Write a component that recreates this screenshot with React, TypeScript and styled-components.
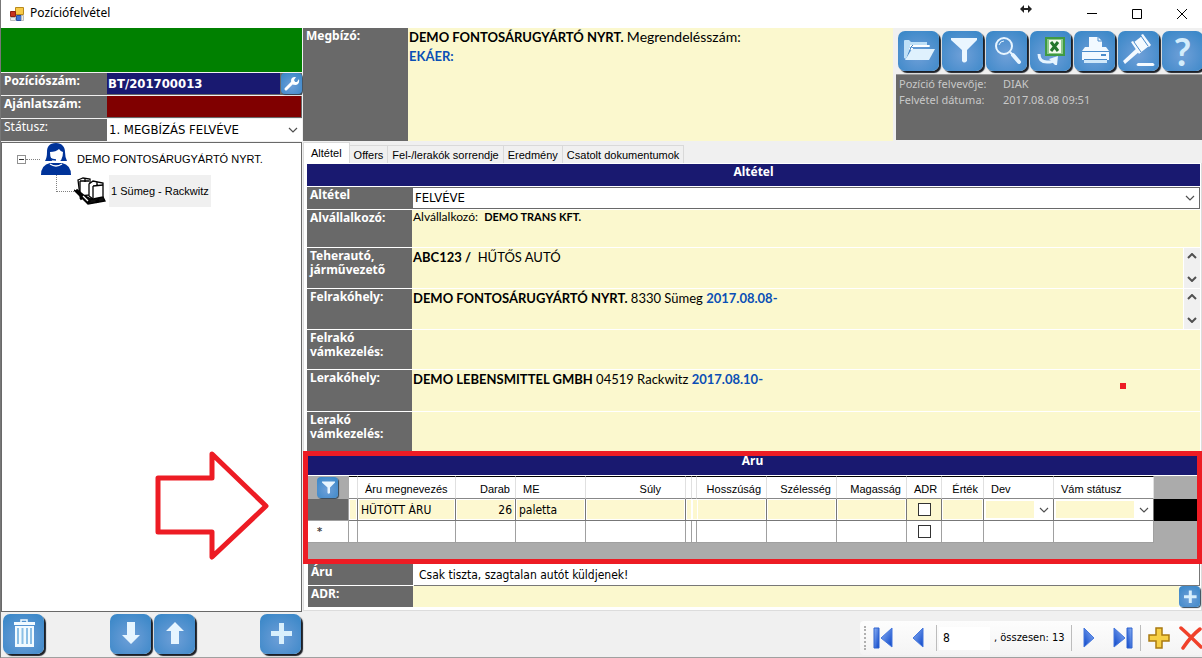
import React from "react";
import styled, { createGlobalStyle, css } from "styled-components";

const c = {
  gray: "#696969",
  navy: "#191970",
  cream: "#fbf8ce",
  form: "#f0f0f0",
  red: "#ed1c24",
  link: "#0a4fb5",
};
const tahoma = `"DejaVu Sans Condensed", "DejaVu Sans", sans-serif`;
const label = `"Noto Sans", "Open Sans", sans-serif`;
const calibri = `Lato, "Open Sans", sans-serif`;
const msSans = `"Liberation Sans", Arial, sans-serif`;

const Global = createGlobalStyle`
  * { box-sizing: border-box; }
  body { margin: 0; background: ${c.form}; overflow-x: hidden; color: #000; font: 12px/16px ${msSans}; }
  button, input, select { font: inherit; color: inherit; margin: 0; padding: 0; border: 0; border-radius: 0; background: none; }
  svg { display: block; flex: none; }
`;

const Window = styled.div`
  display: flex;
  flex-direction: column;
  min-height: 100vh;
  overflow: hidden;
  border-left: 1px solid #777;
  border-bottom: 2px solid #a0a0a0;
`;
const TitleBar = styled.header`
  display: flex;
  align-items: center;
  height: 28px;
  padding-left: 9px;
  gap: 6px;
  background: #fff;
`;
const Title = styled.h1`
  margin: 0;
  flex: 1;
  font: 400 12px/16px ${label};
  padding-bottom: 2px;
`;
const WindowControls = styled.div`
  display: flex;
  gap: 5px;
  margin-left: 34px;
`;
const WindowButton = styled.button`
  display: grid;
  place-items: center;
  width: 40px;
  height: 24px;
`;
const Body = styled.div`
  flex: 1;
  display: grid;
  grid-template-columns: 302px minmax(0, 1fr);
`;
const Side = styled.aside`
  display: flex;
  flex-direction: column;
  padding-right: 1px;
`;
const Main = styled.main`
  display: flex;
  flex-direction: column;
  min-width: 0;
`;
const Banner = styled.div`
  height: 44px;
  background: #008000;
`;
const InfoRow = styled.div`
  display: flex;
  height: 22px;
  margin-top: 1px;
  background: ${c.gray};
`;
const InfoLabel = styled.label<{ $plain?: boolean }>`
  width: 105px;
  padding-left: 3px;
  margin-right: 1px;
  color: #fff;
  font: ${(p) => (p.$plain ? 400 : 700)} 12px/16px ${label};
`;
const InfoInput = styled.input<{ $bg: string }>`
  flex: 1;
  min-width: 0;
  margin: 0 1px 1px 0;
  background: ${(p) => p.$bg};
  color: #fff;
  font: 700 13px/20px ${tahoma};
  padding-left: 1px;
`;
const SelectBox = styled.span<{ $bordered?: boolean }>`
  position: relative;
  display: flex;
  flex: 1;
  min-width: 0;
  background: #fff;
  ${(p) => p.$bordered && css`border: 1px solid ${c.gray};`}
  svg { position: absolute; right: 4px; top: 50%; margin-top: -3px; pointer-events: none; }
`;
const Select = styled.select`
  flex: 1;
  min-width: 0;
  appearance: none;
  padding-left: 2px;
  font: 13px/20px ${tahoma};
`;
const BlueButton = styled.button<{ $small?: boolean }>`
  display: grid;
  place-content: center;
  flex: none;
  width: ${(p) => (p.$small ? 21 : 41)}px;
  height: ${(p) => (p.$small ? 21 : 40)}px;
  border-radius: ${(p) => (p.$small ? 4 : 7)}px;
  background: radial-gradient(circle at 50% 60%, #6fa0d8 0%, #5593d0 45%, #3d89c9 85%);
  box-shadow: ${(p) => (p.$small ? "1px 1px 1px #345" : "2px 2px 1px #1b1f26")};
  color: #e4f3ff;
`;
const HelpMark = styled.span`
  font: 700 38px/38px ${calibri};
  color: #d3ecfb;
`;
const Tree = styled.ul`
  position: relative;
  flex: 1;
  margin: 1px 0 0;
  padding: 0;
  list-style: none;
  background: #fff;
  border: 1px solid ${c.gray};
  min-height: 470px;
`;
const TreeItem = styled.li<{ $child?: boolean }>`
  display: flex;
  align-items: center;
  height: 32px;
  padding-left: ${(p) => (p.$child ? 54 : 15)}px;
`;
const Expander = styled.button`
  display: grid;
  place-items: center;
  width: 9px;
  height: 9px;
  border: 1px solid #919191;
  background: #fff;
  &::after { content: ""; width: 5px; height: 1px; background: #333; }
`;
const HLine = styled.span`
  width: 14px;
  margin-right: 1px;
  border-top: 1px dotted #808080;
`;
const Elbow = styled.span`
  align-self: flex-start;
  width: 18px;
  height: 17px;
  border-left: 1px dotted #808080;
  border-bottom: 1px dotted #808080;
`;
const TreeLabel = styled.span<{ $selected?: boolean }>`
  margin-left: 3px;
  padding: 0 2px;
  font: 11px/32px ${msSans};
  background: ${(p) => (p.$selected ? c.form : "transparent")};
`;
const Pointer = styled.li`
  position: absolute;
  left: 152px;
  top: 306px;
`;
const SideActions = styled.div`
  display: flex;
  gap: 3px;
  height: 45px;
  padding: 2px 1px 0 2px;
`;
const Spring = styled.span`
  flex: 1;
`;
const ClientBar = styled.section`
  display: flex;
  height: 113px;
`;
const ClientLabel = styled.div`
  width: 105px;
  padding-left: 3px;
  background: ${c.gray};
  color: #fff;
  font: 700 12px/16px ${label};
`;
const ClientText = styled.div`
  flex: 1;
  min-width: 0;
  padding: 0 1px;
  background: ${c.cream};
  font: 13px/19px ${calibri};
  margin-right: 3px;
`;
const Note = styled.span`
  font-size: 14px;
  line-height: 16px;
`;
const Blue = styled.b`
  color: ${c.link};
`;
const Tools = styled.div`
  width: 306px;
  overflow: hidden;
`;
const ToolRow = styled.div`
  display: flex;
  gap: 3px;
  padding: 3px 0 0 2px;
  height: 46px;
`;
const Meta = styled.dl`
  display: grid;
  grid-template-columns: 104px 1fr;
  align-content: start;
  height: 66px;
  margin: 0;
  padding: 1px 0 0 3px;
  background: ${c.gray};
  border-top: 1px solid #999;
  color: #c8c8c8;
  font: 11px/16px ${label};
  dd { margin: 0; }
`;
const Tabs = styled.nav`
  display: flex;
  align-items: flex-end;
  height: 22px;
`;
const Tab = styled.button<{ $active?: boolean }>`
  height: ${(p) => (p.$active ? 21 : 18)}px;
  padding: 0 ${(p) => (p.$active ? 7 : 4)}px;
  border: 1px solid #d9d9d9;
  border-left-width: ${(p) => (p.$active ? 1 : 0)}px;
  border-bottom: 0;
  background: ${(p) => (p.$active ? "#fff" : c.form)};
  font: 11px/18px ${msSans};
  white-space: nowrap;
`;
const Page = styled.section`
  position: relative;
  background: #fff;
  border: 1px solid #dcdcdc;
  border-top: 0;
  padding: 1px 0 2px;
`;
const Heading = styled.h2`
  margin: 0 1px 0 3px;
  height: 22px;
  background: ${c.navy};
  color: #fff;
  text-align: center;
  font: 700 12px/16px ${label};
`;
const Field = styled.div<{ $h: number }>`
  display: flex;
  min-height: ${(p) => p.$h}px;
  margin: 1px 1px 0 3px;
`;
const FieldLabel = styled.label`
  width: 105px;
  flex: none;
  padding: 1px 3px 0;
  background: ${c.gray};
  color: #fff;
  font: 700 12px/14px ${label};
`;
const FieldValue = styled.div<{ $small?: boolean }>`
  flex: 1;
  min-width: 0;
  padding: 0 1px;
  background: ${c.cream};
  font: ${(p) => (p.$small ? "12px/14px" : "13px/18px")} ${calibri};
  white-space: pre-wrap;
  b { ${(p) => p.$small && "font-size: 11px;"} }
`;
const Scroller = styled.div`
  display: flex;
  flex-direction: column;
  justify-content: space-between;
  width: 17px;
  padding: 5px 3px 6px;
  border-left: 1px solid #fff;
  background: ${c.form};
`;
const Marker = styled.span`
  position: absolute;
  right: 75px;
  top: 220px;
  width: 6px;
  height: 6px;
  background: ${c.red};
`;
const Goods = styled.section`
  position: relative;
  background: #ababab;
  height: 113px;
  margin: 0 -1px;
  &::after { content: ""; position: absolute; inset: 0; border: 5px solid ${c.red}; pointer-events: none; }
`;
const GoodsHeading = styled(Heading)`
  height: 25px;
  margin: 0;
  padding-top: 2px;
  border-bottom: 1px solid #fff;
`;
const Grid = styled.table`
  width: 100%;
  table-layout: fixed;
  border-collapse: separate;
  border-spacing: 0;
  th, td { padding: 0; height: 22px; }
  thead th { height: 23px; }
  td:last-child, th:last-child, th:first-child { border: 0; background: transparent; }
  tr.current td:last-child { background: #000; }
`;
const Th = styled.th<{ $align?: string; $pad?: number }>`
  && { padding: 3px ${(p) => p.$pad || 5}px 0 7px; }
  background: #fff;
  border-top: 1px solid #000;
  border-right: 1px solid #e0e0e0;
  border-bottom: 1px solid #888;
  text-align: ${(p) => p.$align || "left"};
  font: 400 11px/18px ${msSans};
  white-space: nowrap;
`;
const Td = styled.td<{ $on?: boolean; $check?: boolean }>`
  background: ${(p) => (p.$check && p.$on ? "#fdf8d0" : "#fff")};
  border-right: 1px solid ${(p) => (p.$on ? "#777" : "#a0a0a0")};
  border-bottom: 1px solid ${(p) => (p.$on ? "#777" : "#a0a0a0")};
  text-align: center;
  vertical-align: middle;
`;
const RowHead = styled.th<{ $on?: boolean }>`
  &&:first-child {
    background: ${(p) => (p.$on ? c.gray : "#fff")};
    border-right: 1px solid #a0a0a0;
    border-bottom: 1px solid #a0a0a0;
  }
  && { padding-right: 12px; }
  color: #444;
  font: 700 11px/16px ${tahoma};
`;
const FilterHead = styled.th`
  && { padding-left: 14px; }
`;
const CellInput = styled.input<{ $right?: boolean; $blank?: boolean }>`
  display: block;
  width: 100%;
  height: 21px;
  background: ${(p) => (p.$blank ? "#fff" : "#fdf8d0")};
  border: ${(p) => (p.$blank ? 0 : 1)}px solid #fff;
  padding: 0 2px;
  text-align: ${(p) => (p.$right ? "right" : "left")};
  font: 12px/18px ${tahoma};
`;
const CellSelect = styled(Select)`
  height: 21px;
  width: 100%;
  border: solid #fff;
  border-width: 2px 19px 2px 2px;
  background: #fdf8d0;
`;
const Check = styled.input`
  display: block;
  margin: 0 auto;
  appearance: none;
  width: 13px;
  height: 13px;
  border: 1px solid #333;
  background: #fff;
`;
const BottomField = styled.div`
  display: flex;
  height: 22px;
  margin: 0 1px 0 4px;
`;
const BottomLabel = styled(FieldLabel)`
  border-bottom: 1px solid #fff;
`;
const BottomInput = styled.input<{ $cream?: boolean }>`
  flex: 1;
  min-width: 0;
  margin-left: ${(p) => (p.$cream ? 0 : 1)}px;
  padding-left: 5px;
  background: ${(p) => (p.$cream ? c.cream : "#fff")};
  border-bottom: 1px solid ${(p) => (p.$cream ? "#fff" : "#777")};
  border-right: ${(p) => (p.$cream ? 0 : 1)}px solid #777;
  font: 12px/18px ${tahoma};
`;
const Footer = styled.footer`
  display: flex;
  justify-content: flex-end;
  flex: 1;
  padding-top: 10px;
`;
const Navigator = styled.div`
  display: flex;
  align-items: center;
  width: 342px;
  height: 34px;
  padding-left: 4px;
  overflow: hidden;
  border-radius: 4px 0 0 4px;
  background: linear-gradient(#fdfdfd, #f4f4f4);
  font: 12px/16px ${tahoma};
  white-space: nowrap;
`;
const Grip = styled.span`
  height: 24px;
  border-left: 2px dotted #b0b0b0;
`;
const Rule = styled.span`
  flex: none;
  width: 1px;
  height: 26px;
  background: #bcbcbc;
`;
const NavButton = styled.button<{ $w?: number }>`
  display: grid;
  place-items: center;
  flex: none;
  width: ${(p) => p.$w || 34}px;
  height: 28px;
`;
const PageInput = styled.input`
  flex: none;
  width: 51px;
  height: 23px;
  margin: 0 4px 0 2px;
  padding-left: 4px;
  background: #fff;
`;
const Total = styled.span`
  flex: none;
  width: 77px;
  font: 11px/16px ${tahoma};
`;

const Chevron = ({ up, bold }: { up?: boolean; bold?: boolean }) => (
  <svg width="10" height="6" viewBox="0 0 10 6" fill="none" stroke="#505050" strokeWidth={bold ? 2 : 1.2}>
    <path d={up ? "M1 5 5 1l4 4" : "M1 1l4 4 4-4"} />
  </svg>
);

const FunnelIcon = ({ size = 40 }: { size?: number }) => (
  <svg width={size} height={size} viewBox="0 0 40 40">
    <path d="M8 7h26v2L24 19v11q-3 3-5 0V19L8 9z" fill="#eaf6ff" />
  </svg>
);
const PlusIcon = ({ size = 40 }: { size?: number }) => (
  <svg width={size} height={size} viewBox="0 0 40 40">
    <path d="M18 9h5v8h8v5h-8v8h-5v-8h-8v-5h8z" fill="#d8effc" />
  </svg>
);

const tools: { name: string; icon: React.ReactNode }[] = [
  {
    name: "Megnyitás",
    icon: (
      <svg width="40" height="40" viewBox="0 0 40 40">
        <path d="M5 27V10q0-1 1-1h4l2 2h16v3h3v2H13L7 28z" fill="#bfe0f7" />
        <path d="M11 15h19M10 18h4" stroke="#fff" strokeWidth="2" />
        <path d="M8 27l4-11 2-2" fill="none" stroke="#3d7fc0" />
        <path d="M13 18h23l-6 11H6z" fill="#dff1fd" />
      </svg>
    ),
  },
  { name: "Szűrés", icon: <FunnelIcon /> },
  {
    name: "Keresés",
    icon: (
      <svg width="40" height="40" viewBox="0 0 40 40" fill="none" stroke="#e8f5ff">
        <circle cx="17" cy="15" r="8" strokeWidth="2" />
        <path d="M12 14q1-4 5-4" strokeWidth="1" />
        <path d="m23 21 3 3" strokeWidth="2" />
        <path d="m26 24 6 7" strokeWidth="4" strokeLinecap="round" />
      </svg>
    ),
  },
  {
    name: "Excel export",
    icon: (
      <svg width="40" height="40" viewBox="0 0 40 40">
        <path d="M14 6h20v19H14z" fill="#3f9a43" />
        <path d="M16 8h16v15H16z" fill="#8cc98a" />
        <path d="M18 9h12v13H18z" fill="#f2faee" />
        <path d="m20 11 7 9m0-9-7 9" stroke="#23762b" strokeWidth="3" />
        <path d="M8 23q0 8 8 8h3q4 0 5-4" fill="none" stroke="#e6f4ff" strokeWidth="3" />
        <path d="m18 28 9-3-1 9h-2z" fill="#e6f4ff" />
      </svg>
    ),
  },
  {
    name: "Nyomtatás",
    icon: (
      <svg width="40" height="40" viewBox="0 0 40 40" fill="#f2f9ff">
        <path d="M14 6h9l4 4v6H14z" />
        <path d="M23 6v4h4" fill="none" stroke="#4a8bcb" />
        <path d="M10 16h21l3 4v9H7v-9z" />
        <path d="M7 20.500h27M9 28.500h23" stroke="#4a8bcb" />
        <path d="M26 23h5v2h-5z" fill="#4a8bcb" />
        <path d="M9 29h23v3H9z" fill="#d0e8fa" />
      </svg>
    ),
  },
  {
    name: "Aukció",
    icon: (
      <svg width="40" height="40" viewBox="0 0 40 40" fill="#f4faff">
        <path d="M19 16 4 30l2 3 15-13z" />
        <path d="m14 12 9-7 7 10-9 7z" />
        <path d="m12 11 2-1 8 11-2 2zM22 4l2-1 8 11-2 2z" />
        <path d="m15 11 7 10M22 5l7 10" stroke="#4a8bcb" />
        <path d="M19 32h15q3 2 0 3H19q-3-1 0-3z" />
      </svg>
    ),
  },
  { name: "Súgó", icon: <HelpMark>?</HelpMark> },
];

const TrashIcon = () => (
  <svg width="40" height="40" viewBox="0 0 40 40">
    <path d="M17 8V6h6v2" fill="none" stroke="#f2faff" strokeWidth="1.500" />
    <path d="M10 8h21v3H10zM11 12h19v21H11z" fill="#f2faff" />
    <path d="M14 14v16M18.500 14v16M23 14v16M27 14v16" stroke="#8cbfe6" strokeWidth="2" />
  </svg>
);
const ArrowIcon = ({ up }: { up?: boolean }) => (
  <svg width="40" height="40" viewBox="0 0 40 40">
    <path
      d={up ? "M21 8l9 9h-5v13h-8V17h-5z" : "M17 8h8v13h5l-9 9-9-9h5z"}
      fill="#e6f5ff"
    />
  </svg>
);

const AgentIcon = () => (
  <svg width="31" height="32" viewBox="0 0 31 32">
    <path d="M15 0C8 0 6 4 6 9q0 6-2 9h22q-2-4-2-9c0-5-3-9-9-9z" fill="#039" />
    <path d="M0 32q0-10 9-12h12q9 2 9 12z" fill="#039" />
    <path d="M9 9q6 0 9-3 2 3 4 3 0 10-7 11-6-1-6-11z" fill="#fff" />
    <path d="M7 10q0 7 8 7" fill="none" stroke="#039" strokeWidth="1.500" />
    <path d="M9 21q6 4 12 0" fill="none" stroke="#fff" strokeWidth="1.500" />
  </svg>
);
const CargoIcon = () => (
  <svg width="32" height="28" viewBox="0 0 32 28" fill="#fff" stroke="#000" strokeWidth="1.300">
    <path d="M0 13l14 14 17-3-2-4-12 2z" fill="#111" />
    <path d="M4 3l5-2 7 1v16l-10 1z" />
    <path d="M6 4h9M6 4v14M11 2v3" />
    <path d="M15 7l4-3 10 2v14l-10 2-4-3z" />
    <path d="M19 9l10-1M19 9v12M23 5v4" />
    <path d="M2 13l11 9M6 22l3-2M13 26l3-3M22 25l3-2" strokeWidth="3" />
    <path d="M9 19l5 5" stroke="#fff" />
  </svg>
);

const blueFill = "url(#nav-blue)";
const NavDefs = () => (
  <svg width="0" height="0">
    <defs>
      <linearGradient id="nav-blue" x1="0" y1="0" x2="1" y2="1">
        <stop offset="0" stopColor="#8fb4f5" />
        <stop offset="1" stopColor="#0b45c8" />
      </linearGradient>
    </defs>
  </svg>
);
const StepIcon = ({ back, end }: { back?: boolean; end?: boolean }) => (
  <svg width={end ? 20 : 12} height="22" viewBox={end ? "0 0 20 22" : "0 0 12 22"}>
    <g transform={back ? undefined : `translate(${end ? 20 : 12} 0) scale(-1 1)`}>
      {end && <path d="M1 1h5v20H1z" fill={blueFill} stroke="#2e62cf" />}
      <path
        d={end ? "M19 1v19L8 11z" : "M11 1v19L1 11z"}
        fill={blueFill}
        stroke="#4577dd"
      />
    </g>
  </svg>
);

const rows: { id: string; text: string; h: number; small?: boolean; scroll?: boolean; body?: React.ReactNode }[] = [
  { id: "sub", text: "Alvállalkozó:", h: 37, small: true, body: <>Alvállalkozó:{"  "}<b>DEMO TRANS KFT.</b></> },
  { id: "truck", text: "Teherautó, járművezető", h: 40, scroll: true, body: <><b>ABC123 /</b>{"  "}HŰTŐS AUTÓ</> },
  { id: "load", text: "Felrakóhely:", h: 40, scroll: true, body: <><b>DEMO FONTOSÁRUGYÁRTÓ NYRT.</b> 8330 Sümeg <Blue>2017.08.08-</Blue></> },
  { id: "loadc", text: "Felrakó vámkezelés:", h: 39 },
  { id: "unload", text: "Lerakóhely:", h: 41, body: <><b>DEMO LEBENSMITTEL GMBH</b> 04519 Rackwitz <Blue>2017.08.10-</Blue></> },
  { id: "unloadc", text: "Lerakó vámkezelés:", h: 39 },
];

type Column = { title: string; w: number; align?: string; pad?: number; value?: string; kind?: "check" | "select" };
const columns: Column[] = [
  { title: "", w: 9 },
  { title: "Áru megnevezés", w: 98, value: "HŰTÖTT ÁRU" },
  { title: "Darab", w: 60, align: "right", value: "26" },
  { title: "ME", w: 70, value: "paletta" },
  { title: "Súly", w: 100, align: "right", pad: 24 },
  { title: "", w: 6 },
  { title: "", w: 5 },
  { title: "Hosszúság", w: 70, align: "right" },
  { title: "Szélesség", w: 70, align: "right" },
  { title: "Magasság", w: 70, align: "right" },
  { title: "ADR", w: 35, align: "center", kind: "check" },
  { title: "Érték", w: 42, align: "right" },
  { title: "Dev", w: 70, kind: "select" },
  { title: "Vám státusz", w: 100, kind: "select" },
];

const Cell = ({ col, on }: { col: Column; on?: boolean }) => {
  if (col.kind === "check") return <Check type="checkbox" aria-label={col.title} />;
  if (col.kind === "select" && on)
    return (
      <SelectBox>
        <CellSelect aria-label={col.title}><option /></CellSelect>
        <Chevron />
      </SelectBox>
    );
  return (
    <CellInput
      aria-label={col.title || "Jelölés"}
      $blank={!on}
      $right={col.align === "right"}
      defaultValue={on ? col.value : ""}
    />
  );
};

export default function App() {
  return (
    <Window>
      <Global />
      <TitleBar>
        <svg width="14" height="14" viewBox="0 0 14 14">
          <path d="M5.500.5h8v7h-8z" fill="#f7c948" stroke="#b98a1c" />
          <path d="M.5 4.500h5v5h-5z" fill="#c8321e" stroke="#8d2212" />
          <path d="M6.500 8.500h5v5h-5z" fill="#3f73d2" stroke="#2a4f9e" />
          <path d="M.5 10.500h5v3h-5zM11.500 8.500h2v5h-2z" fill="#ececec" stroke="#bbb" />
        </svg>
        <Title>Pozíciófelvétel</Title>
        <svg width="12" height="26" viewBox="0 0 12 26">
          <path d="M0 8l4-4v3h4V4l4 4-4 4V9H4v3z" fill="#222" />
        </svg>
        <WindowControls>
          <WindowButton aria-label="Kis méret">
            <svg width="11" height="11"><path d="M0 4.500h10" stroke="#000" /></svg>
          </WindowButton>
          <WindowButton aria-label="Teljes méret">
            <svg width="11" height="11"><path d="M.5.500h9v9h-9z" fill="none" stroke="#000" /></svg>
          </WindowButton>
          <WindowButton aria-label="Bezárás">
            <svg width="11" height="11"><path d="M0 0l10 10M10 0 0 10" stroke="#000" /></svg>
          </WindowButton>
        </WindowControls>
      </TitleBar>
      <Body>
        <Side>
          <Banner />
          <InfoRow>
            <InfoLabel htmlFor="pos">Pozíciószám:</InfoLabel>
            <InfoInput id="pos" $bg={c.navy} defaultValue="BT/201700013" />
            <BlueButton $small aria-label="Beállítás">
              <svg width="19" height="19" viewBox="0 0 19 19">
                <path d="M4 15l7-7" stroke="#fff" strokeWidth="3" strokeLinecap="round" />
                <path d="M9 7q0-4 4-4l1 0-2 3 1 2 2 0 2-3q1 5-3 6-3 0-4-1z" fill="#fff" />
              </svg>
            </BlueButton>
          </InfoRow>
          <InfoRow>
            <InfoLabel htmlFor="offer">Ajánlatszám:</InfoLabel>
            <InfoInput id="offer" $bg="#800000" />
          </InfoRow>
          <InfoRow>
            <InfoLabel htmlFor="status" $plain>Státusz:</InfoLabel>
            <SelectBox>
              <Select id="status"><option>1. MEGBÍZÁS FELVÉVE</option></Select>
              <Chevron />
            </SelectBox>
          </InfoRow>
          <Tree>
            <TreeItem>
              <Expander aria-label="Összecsukás" />
              <HLine />
              <AgentIcon />
              <TreeLabel>DEMO FONTOSÁRUGYÁRTÓ NYRT.</TreeLabel>
            </TreeItem>
            <TreeItem $child>
              <Elbow />
              <CargoIcon />
              <TreeLabel $selected>1 Sümeg - Rackwitz</TreeLabel>
            </TreeItem>
            <Pointer>
              <svg width="118" height="116" viewBox="0 0 118 116" fill="none" stroke={c.red} strokeWidth="5">
                <path d="M4 29h54V5l54 52-54 51V83H4z" strokeLinejoin="round" />
              </svg>
            </Pointer>
          </Tree>
          <SideActions>
            <BlueButton aria-label="Törlés"><TrashIcon /></BlueButton>
            <Spring />
            <BlueButton aria-label="Le"><ArrowIcon /></BlueButton>
            <BlueButton aria-label="Fel"><ArrowIcon up /></BlueButton>
            <Spring />
            <BlueButton aria-label="Hozzáadás"><PlusIcon /></BlueButton>
          </SideActions>
        </Side>
        <Main>
          <ClientBar>
            <ClientLabel>Megbízó:</ClientLabel>
            <ClientText>
              <b>DEMO FONTOSÁRUGYÁRTÓ NYRT.</b> <Note>Megrendelésszám:</Note>
              <br />
              <Blue>EKÁER:</Blue>
            </ClientText>
            <Tools>
              <ToolRow>
                {tools.map((t) => (
                  <BlueButton key={t.name} aria-label={t.name}>{t.icon}</BlueButton>
                ))}
              </ToolRow>
              <Meta>
                <dt>Pozíció felvevője:</dt><dd>DIAK</dd>
                <dt>Felvétel dátuma:</dt><dd>2017.08.08 09:51</dd>
              </Meta>
            </Tools>
          </ClientBar>
          <Tabs>
            <Tab $active>Altétel</Tab>
            <Tab>Offers</Tab>
            <Tab>Fel-/lerakók sorrendje</Tab>
            <Tab>Eredmény</Tab>
            <Tab>Csatolt dokumentumok</Tab>
          </Tabs>
          <Page>
            <Heading>Altétel</Heading>
            <Field $h={22}>
              <FieldLabel htmlFor="item">Altétel</FieldLabel>
              <SelectBox $bordered>
                <Select id="item"><option>FELVÉVE</option></Select>
                <Chevron />
              </SelectBox>
            </Field>
            {rows.map((r) => (
              <Field key={r.id} $h={r.h}>
                <FieldLabel as="div">{r.text}</FieldLabel>
                <FieldValue $small={r.small}>{r.body}</FieldValue>
                {r.scroll && (
                  <Scroller>
                    <Chevron up bold />
                    <Chevron bold />
                  </Scroller>
                )}
              </Field>
            ))}
            <Goods>
              <GoodsHeading>Áru</GoodsHeading>
              <Grid>
                <colgroup>
                  <col style={{ width: 46 }} />
                  {columns.map((col, i) => <col key={i} style={{ width: col.w }} />)}
                  <col />
                </colgroup>
                <thead>
                  <tr>
                    <FilterHead>
                      <BlueButton $small aria-label="Szűrő"><FunnelIcon size={20} /></BlueButton>
                    </FilterHead>
                    {columns.map((col, i) => <Th key={i} $align={col.align} $pad={col.pad}>{col.title}</Th>)}
                    <th />
                  </tr>
                </thead>
                <tbody>
                  <tr className="current">
                    <RowHead $on />
                    {columns.map((col, i) => (
                      <Td key={i} $on $check={col.kind === "check"}><Cell col={col} on /></Td>
                    ))}
                    <td />
                  </tr>
                  <tr>
                    <RowHead>*</RowHead>
                    {columns.map((col, i) => <Td key={i}><Cell col={col} /></Td>)}
                    <td />
                  </tr>
                </tbody>
              </Grid>
            </Goods>
            <BottomField>
              <BottomLabel htmlFor="goods">Áru</BottomLabel>
              <BottomInput id="goods" defaultValue="Csak tiszta, szagtalan autót küldjenek!" />
            </BottomField>
            <BottomField>
              <BottomLabel htmlFor="adr">ADR:</BottomLabel>
              <BottomInput id="adr" $cream />
              <BlueButton $small aria-label="ADR hozzáadása"><PlusIcon size={24} /></BlueButton>
            </BottomField>
            <Marker />
          </Page>
          <Footer>
            <Navigator>
              <NavDefs />
              <Grip />
              <NavButton aria-label="Első"><StepIcon back end /></NavButton>
              <NavButton $w={36} aria-label="Előző"><StepIcon back /></NavButton>
              <Rule />
              <PageInput aria-label="Sorszám" defaultValue="8" />
              <Total>, összesen: 13</Total>
              <Rule />
              <NavButton aria-label="Következő"><StepIcon /></NavButton>
              <NavButton aria-label="Utolsó"><StepIcon end /></NavButton>
              <Rule />
              <NavButton $w={36} aria-label="Új">
                <svg width="22" height="22" viewBox="0 0 22 22">
                  <path d="M8 1h6v7h7v6h-7v7H8v-7H1V8h7z" fill="#f6cf45" stroke="#a97a10" strokeWidth="1.500" />
                </svg>
              </NavButton>
              <NavButton $w={28} aria-label="Mégse">
                <svg width="24" height="24" viewBox="0 0 24 24" stroke="#f0412a" strokeWidth="3.500" strokeLinecap="round">
                  <path d="M2 2q9 8 20 19M21 3Q12 10 4 22" fill="none" />
                </svg>
              </NavButton>
            </Navigator>
          </Footer>
        </Main>
      </Body>
    </Window>
  );
}
